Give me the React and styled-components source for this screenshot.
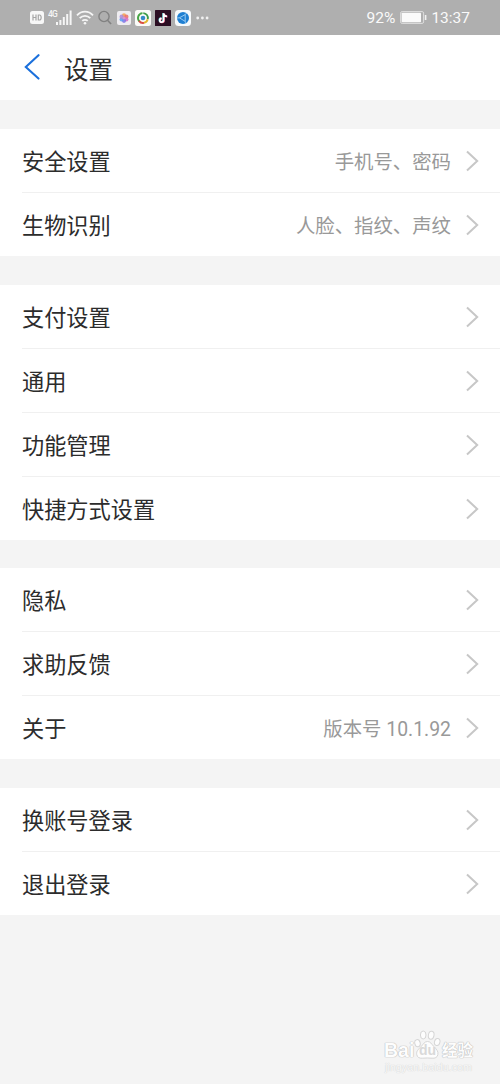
import React from "react";
import styled, { createGlobalStyle } from "styled-components";

const groups = [
  {
    gap: 29,
    items: [
      { label: "安全设置", detail: "手机号、密码" },
      { label: "生物识别", detail: "人脸、指纹、声纹" },
    ],
  },
  {
    gap: 29,
    items: [
      { label: "支付设置" },
      { label: "通用" },
      { label: "功能管理" },
      { label: "快捷方式设置" },
    ],
  },
  {
    gap: 28,
    items: [
      { label: "隐私" },
      { label: "求助反馈" },
      { label: "关于", detail: "版本号 10.1.92" },
    ],
  },
  {
    gap: 29,
    items: [{ label: "换账号登录" }, { label: "退出登录" }],
  },
];

const HdIcon = () => (
  <svg width="14" height="13" viewBox="0 0 14 13">
    <rect width="14" height="13" rx="2.5" fill="#f7f7f7" />
    <path
      d="M3 3.5v6M6 3.5v6M3 6.5h3M8.3 4v5h1.2c2.2 0 2.2-5 0-5z"
      stroke="#a5a5a5"
      strokeWidth="1.2"
      fill="none"
    />
  </svg>
);

const SignalIcon = () => (
  <svg width="16" height="15" viewBox="0 0 16 15" fill="#f5f5f5">
    <rect x="0" y="12" width="2" height="3" />
    <rect x="3.4" y="10" width="2" height="5" />
    <rect x="6.8" y="7" width="2" height="8" />
    <rect x="10.2" y="4" width="2" height="11" />
    <rect x="13.6" y="0.5" width="2" height="14.5" />
  </svg>
);

const WifiIcon = () => (
  <svg width="18" height="15" viewBox="0 0 18 15" fill="none" stroke="#f5f5f5">
    <path d="M1 5.3C5.5.4 12.5.4 17 5.3" strokeWidth="1.8" />
    <path d="M3.7 8.2c3-3.1 7.6-3.1 10.6 0" strokeWidth="1.8" />
    <path d="M6.3 10.9c1.5-1.5 3.9-1.5 5.4 0" strokeWidth="1.8" />
    <circle cx="9" cy="13.2" r="1.3" fill="#f5f5f5" stroke="none" />
  </svg>
);

const SearchIcon = () => (
  <svg width="14" height="15" viewBox="0 0 14 15" fill="none" stroke="#828282">
    <circle cx="6" cy="6.5" r="5.1" strokeWidth="1.4" />
    <path d="M9.5 10.2l3.6 3.8" strokeWidth="1.6" />
  </svg>
);

const PetalsIcon = () => (
  <svg width="14" height="14" viewBox="0 0 14 14">
    <rect width="14" height="14" rx="2" fill="#efedf1" />
    <g fillOpacity="0.85">
      <circle cx="7" cy="4.4" r="2.1" fill="#f5a04e" />
      <circle cx="9.4" cy="5.7" r="2.1" fill="#ee7064" />
      <circle cx="9.4" cy="8.5" r="2.1" fill="#d66cc4" />
      <circle cx="7" cy="9.8" r="2.1" fill="#7d74e6" />
      <circle cx="4.6" cy="8.5" r="2.1" fill="#5c9cf0" />
      <circle cx="4.6" cy="5.7" r="2.1" fill="#a98bd8" />
      <circle cx="7" cy="7" r="1.6" fill="#d58fd0" />
    </g>
  </svg>
);

const BrowserIcon = () => (
  <svg width="16" height="16" viewBox="0 0 16 16" fill="none">
    <rect width="16" height="16" rx="2.5" fill="#fbfbf8" />
    <g strokeWidth="1.9">
      <path d="M4.6 11.6A4.9 4.9 0 0 1 7.5 3.1" stroke="#4aa648" />
      <path d="M8.3 3.1a4.9 4.9 0 0 1 4.5 6" stroke="#3d9b48" />
      <path d="M12.7 9.3a4.9 4.9 0 0 1-4 3.6" stroke="#e3b62f" />
      <path d="M9 12.9a4.9 4.9 0 0 1-5-2" stroke="#d84c43" />
    </g>
    <circle cx="8" cy="8" r="2.3" fill="#3689c9" />
  </svg>
);

const TiktokIcon = () => (
  <svg width="16" height="16" viewBox="0 0 16 16" fill="none">
    <rect width="16" height="16" rx="0.5" fill="#2b0d22" />
    <g strokeWidth="1.7">
      <path
        d="M8.1 3v7a1.9 1.9 0 1 1-2-1.9M8.1 3c.2 1.8 1.5 3 3.4 3.1"
        stroke="#54d5d8"
      />
      <path
        d="M9.1 3.6v7a1.9 1.9 0 1 1-2-1.9M9.1 3.6c.2 1.8 1.5 3 3.4 3.1"
        stroke="#e45278"
      />
      <path
        d="M8.6 3.3v7a1.9 1.9 0 1 1-2-1.9M8.6 3.3c.2 1.8 1.5 3 3.4 3.1"
        stroke="#fff"
      />
    </g>
  </svg>
);

const BlueAppIcon = () => (
  <svg width="16" height="16" viewBox="0 0 16 16">
    <rect width="16" height="16" rx="3.5" fill="#f7fafc" />
    <circle cx="8" cy="8" r="6" fill="#1f7fd2" />
    <path
      d="M4.4 7.8L10.2 4.6v6.8zM10.2 4.6l1.6-1.8M10.2 11.4l1 1.8M4.4 7.8l-2.4.2"
      fill="none"
      stroke="#a5d3f5"
      strokeWidth="0.9"
    />
  </svg>
);

const DotsIcon = () => (
  <svg width="13" height="4" viewBox="0 0 13 4" fill="#f1f1f1">
    <circle cx="1.7" cy="2" r="1.4" />
    <circle cx="6.4" cy="2" r="1.4" />
    <circle cx="11.1" cy="2" r="1.4" />
  </svg>
);

const BatteryIcon = () => (
  <svg width="27" height="13" viewBox="0 0 27 13">
    <rect x="0.6" y="0.6" width="23" height="11.8" rx="1.5" fill="none" stroke="#dedede" />
    <rect x="1.6" y="1.7" width="19.4" height="9.6" rx="0.7" fill="#fafafa" />
    <path d="M25.6 4v5" stroke="#f2f2f2" strokeWidth="1.6" />
  </svg>
);

const PawIcon = () => (
  <svg width="27" height="30" viewBox="0 0 27 30">
    <g fill="#fdfdfd" stroke="#d6d6d6" strokeWidth="1">
      <ellipse cx="3.5" cy="13.2" rx="2.7" ry="3.6" transform="rotate(-15 3.5 13.2)" />
      <ellipse cx="9.2" cy="5" rx="2.8" ry="4" />
      <ellipse cx="17.2" cy="5.2" rx="2.8" ry="4" transform="rotate(10 17.2 5.2)" />
      <ellipse cx="23.2" cy="12" rx="2.7" ry="3.6" transform="rotate(15 23.2 12)" />
      <path d="M13.5 11.5c3 0 4 2.500 6.300 5 2.700 2.800 4.700 4.700 4.100 8-.5 3-3 4-5.800 3.700-3.300-.3-6.300-.3-9.600 0-2.800.3-5.300-.7-5.800-3.700-.6-3.300 1.800-5.200 4.500-8 2.300-2.500 3.300-5 6.300-5z" />
    </g>
  </svg>
);

const App = () => {
  return (
    <>
      <GlobalStyle />
      <Screen>
        <StatusBar>
          <StatusLeft>
            <HdIcon />
            <Network>
              <NetworkType>4G</NetworkType>
              <SignalIcon />
            </Network>
            <WifiIcon />
            <SearchIcon />
            <AppIcons>
              <PetalsIcon />
              <BrowserIcon />
              <TiktokIcon />
              <BlueAppIcon />
            </AppIcons>
            <DotsIcon />
          </StatusLeft>
          <StatusRight>
            <span>92%</span>
            <BatteryIcon />
            <span>13:37</span>
          </StatusRight>
        </StatusBar>
        <Header>
          <BackButton aria-label="返回">
            <svg width="16" height="26" viewBox="0 0 16 26" fill="none">
              <path
                d="M14.5 1.2L1.8 12.9l12.7 11.7"
                stroke="#1b70dc"
                strokeWidth="2.1"
                strokeLinecap="round"
              />
            </svg>
          </BackButton>
          <Title>设置</Title>
        </Header>
        {groups.map((group) => (
          <Group key={group.items[0].label} $gap={group.gap}>
            {group.items.map((item) => (
              <Row key={item.label}>
                <Label>{item.label}</Label>
                {item.detail && <Detail>{item.detail}</Detail>}
                <svg width="13" height="22" viewBox="0 0 13 22" fill="none">
                  <path d="M1 1.5L11.2 11 1 20.5" stroke="#c7c7c7" strokeWidth="2" />
                </svg>
              </Row>
            ))}
          </Group>
        ))}
        <Watermark>
          <Brand>
            <Latin>Bai</Latin>
            <Paw>
              <PawIcon />
              <Du>du</Du>
            </Paw>
            <Jingyan>经验</Jingyan>
          </Brand>
          <Site>jingyan.baidu.com</Site>
        </Watermark>
      </Screen>
    </>
  );
};

export default App;

const GlobalStyle = createGlobalStyle`
  body {
    margin: 0;
    background-color: #f4f4f4;
    font-family: Roboto, "Noto Sans CJK SC", sans-serif;
  }
  svg {
    display: block;
    flex-shrink: 0;
  }
`;

const Screen = styled.div`
  position: relative;
  width: 500px;
  height: 1084px;
  overflow: hidden;
  background-color: #f4f4f4;
`;

const StatusBar = styled.div`
  display: flex;
  justify-content: space-between;
  align-items: center;
  box-sizing: border-box;
  height: 35px;
  padding: 0 30px;
  background-color: #afafaf;
`;

const StatusLeft = styled.div`
  display: flex;
  align-items: center;
  gap: 4px;
`;

const AppIcons = styled.div`
  display: flex;
  align-items: center;
  gap: 4px;
  margin: 0 1px;
`;

const Network = styled.div`
  display: flex;
  align-items: flex-start;
`;

const NetworkType = styled.span`
  width: 8px;
  font-size: 8.5px;
  line-height: 9px;
  font-weight: 500;
  letter-spacing: -0.8px;
  color: #f5f5f5;
`;

const StatusRight = styled.div`
  display: flex;
  align-items: center;
  gap: 4.5px;
  font-size: 15.5px;
  line-height: 18px;
  color: #fafafa;
`;

const Header = styled.header`
  display: flex;
  align-items: center;
  box-sizing: border-box;
  height: 65px;
  padding-left: 24px;
  background-color: #fff;
`;

const BackButton = styled.button`
  display: flex;
  padding: 0;
  margin-bottom: 1px;
  border: none;
  outline: none;
  background: none;
  cursor: pointer;
`;

const Title = styled.h1`
  margin: 0 0 0 24px;
  padding-top: 6px;
  font-size: 24.5px;
  line-height: 30px;
  font-weight: 400;
  color: #2c2c2c;
`;

const Row = styled.div`
  display: flex;
  align-items: center;
  height: 63px;
  padding-right: 21px;
  border-bottom: 1px solid #f0f0f0;

  &:last-child {
    border-bottom: none;
  }
`;

const Group = styled.section`
  margin-top: ${(props) => props.$gap}px;
  padding-left: 22px;
  background-color: #fff;
`;

const Label = styled.span`
  flex: 1;
  padding-top: 2px;
  font-size: 22.2px;
  line-height: 30px;
  color: #2c2c2c;
`;

const Detail = styled.span`
  margin-right: 15px;
  padding-top: 4px;
  font-size: 19.4px;
  line-height: 28px;
  color: #999;
`;

const Watermark = styled.div`
  position: absolute;
  right: 25px;
  bottom: 10px;
  width: 91px;
  color: #fdfdfd;
  text-shadow: 0 0 1px #bbb, 0 0 1px #bbb, 0 0 1px #ccc;
`;

const Brand = styled.div`
  display: flex;
  align-items: flex-end;
  height: 30px;
`;

const Latin = styled.span`
  width: 30px;
  font-family: "Liberation Sans", sans-serif;
  font-size: 19.5px;
  line-height: 20px;
  font-weight: 700;
`;

const Paw = styled.div`
  position: relative;
  width: 27px;
`;

const Du = styled.span`
  position: absolute;
  left: 5px;
  bottom: 2px;
  font-family: "Liberation Sans", sans-serif;
  font-size: 14px;
  line-height: 15px;
  font-weight: 700;
  color: #d9d9d9;
  text-shadow: none;
`;

const Jingyan = styled.span`
  margin-left: 1px;
  font-size: 15.5px;
  line-height: 18px;
  font-weight: 700;
  white-space: nowrap;
`;

const Site = styled.div`
  margin-left: 1px;
  font-family: "Liberation Sans", sans-serif;
  font-size: 10.8px;
  line-height: 14px;
  white-space: nowrap;
  color: #f8f8f8;
  text-shadow: 0 0 1px #d0d0d0, 0 0 1px #ddd;
`;
